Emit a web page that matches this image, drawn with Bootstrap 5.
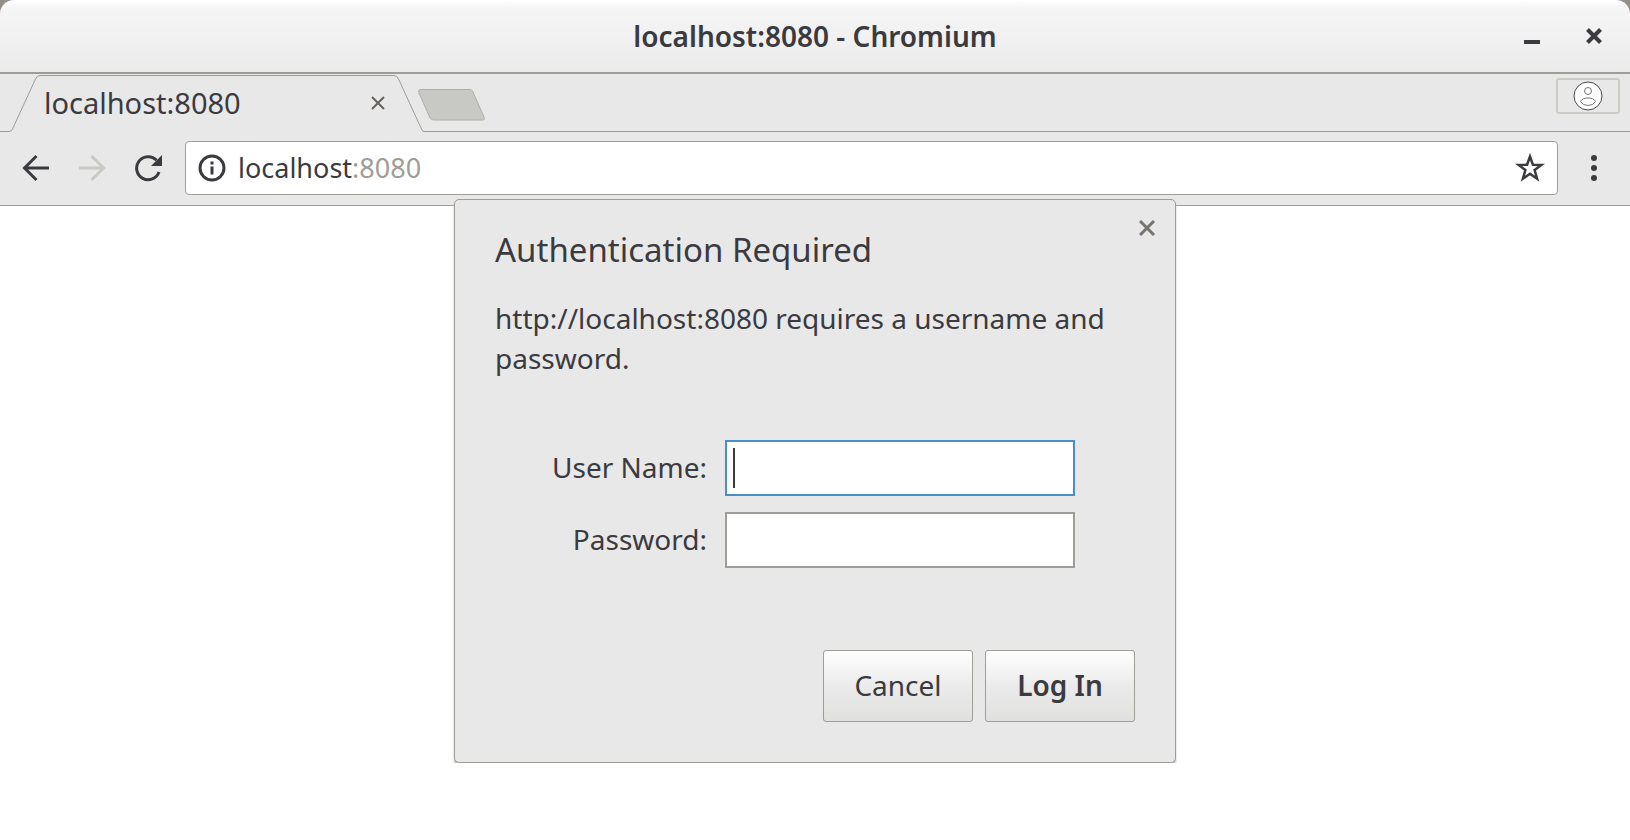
<!DOCTYPE html>
<html lang="en">
<head>
<meta charset="utf-8">
<meta name="viewport" content="width=device-width, initial-scale=1">
<title>localhost:8080 - Chromium</title>
<link href="https://cdn.jsdelivr.net/npm/bootstrap@5.3.0/dist/css/bootstrap.min.css" rel="stylesheet">
<style>
:root { --ink:#3b3a3f; --edge:#a09c97; --face:#e8e8e8; }
body { font-family:"Noto Sans","Open Sans",sans-serif; font-size:28px; line-height:40px; color:var(--ink); background:#fff; }
.titlebar-wrap { background:#948f89; }
.titlebar { height:74px; border-bottom:2px solid var(--edge); border-radius:14px 14px 0 0; background:linear-gradient(#fff 0,#f5f5f5 8px,#f0f0f0 44px,#eaeaea 100%); }
.titlebar h1 { font-size:28px; line-height:40px; font-weight:600; }
.window-controls { right:28px; top:24px; gap:46px; }
.plain { border:0; padding:0; background:none; color:inherit; display:flex; align-items:center; justify-content:center; }
.tabstrip, .toolbar { background:var(--face); }
.tabstrip { height:58px; }
.tab { width:424px; padding:0 39px 0 44px; font-size:29px; }
.tab-shape { inset:0; }
.strip-rest { border-bottom:1px solid var(--edge); padding:4px 10px 0 0; }
.new-tab { margin:10px 0 0 -7px; }
.profile { width:64px; height:36px; border:2px solid #cbcbc6; border-radius:3px; }
.toolbar { height:74px; border-bottom:1px solid var(--edge); padding:0 24px 2px 22px; }
.nav-buttons { gap:28px; margin-right:23px; }
.omnibox { height:54px; background:#fff; border:1px solid var(--edge); border-radius:4px; padding:0 12px; }
.url { font-size:27px; margin-left:12px; }
.url .port { color:var(--edge); }
.auth { width:722px; max-width:100%; margin-top:-7px; padding:28px 40px 40px; background:var(--face); border:1px solid var(--edge); border-radius:5px; box-shadow:0 3px 2px #bcbcb7; }
.auth h2 { font-size:33px; line-height:44px; font-weight:400; margin-bottom:26px; }
.auth p { margin-bottom:62px; }
.auth-close { right:20px; top:20px; }
.fields { display:grid; grid-template-columns:212px 1fr; column-gap:18px; row-gap:16px; align-items:center; padding-right:60px; margin-bottom:82px; }
.fields label { padding-bottom:2px; }
.field { height:56px; border:2px solid var(--edge); border-radius:0; padding:0 8px; font-size:28px; }
.field.active, .field:focus { border-color:#4b8ecb; box-shadow:none; }
.caret { left:8px; top:8px; width:2px; height:40px; background:var(--ink); }
.actions { gap:12px; }
.gbtn { width:150px; height:72px; padding:0 0 2px; font-size:28px; line-height:40px; color:var(--ink); border:1px solid var(--edge); border-radius:3px; background:linear-gradient(#fff,#ebebeb 50%,#e8e8e8 65%,#e0e0de); }
</style>
</head>
<body>
<header>
  <div class="titlebar-wrap">
    <div class="titlebar position-relative d-flex align-items-center justify-content-center">
      <h1 class="m-0">localhost:8080 - Chromium</h1>
      <div class="window-controls position-absolute d-flex">
        <button class="plain" type="button" aria-label="Minimize"><svg width="16" height="24" fill="currentColor"><path d="M0 16h16v4H0z"/></svg></button>
        <button class="plain" type="button" aria-label="Close window"><svg width="16" height="24" fill="none" stroke="currentColor" stroke-width="4"><path d="M1.500 5.500l13 13m0-13l-13 13"/></svg></button>
      </div>
    </div>
  </div>
  <div class="tabstrip d-flex">
    <div class="tab position-relative d-flex align-items-center justify-content-between flex-shrink-0">
      <svg class="tab-shape position-absolute" width="424" height="58" fill="none" stroke="#a09c97"><path d="M0 57.500H9Q11.500 57.500 12.500 55L35.500 5Q37 1.500 40 1.500H394Q397 1.500 398.500 5L421.500 55Q422.500 57.500 424 57.500"/></svg>
      <span class="position-relative">localhost:8080</span>
      <button class="plain position-relative" type="button" aria-label="Close tab"><svg width="14" height="14" fill="none" stroke="#66625f" stroke-width="2"><path d="M1 1l12 12M13 1L1 13"/></svg></button>
    </div>
    <div class="strip-rest flex-grow-1 d-flex align-items-start justify-content-between">
      <button class="plain new-tab" type="button" aria-label="New tab"><svg width="70" height="34"><path d="M3 1.500H53Q55 1.500 56 4L67 29Q68 32 66 32H17Q14 32 13 30L2 5Q1 1.500 3 1.500z" fill="#c8c8c4" stroke="#b0aea9"/></svg></button>
      <button class="plain profile" type="button" aria-label="Profile"><svg width="30" height="30" fill="#fff" stroke="#4a484b"><circle cx="15" cy="15" r="14"/><g stroke="#77746f"><circle cx="15" cy="10" r="3.500"/><path d="M7.500 20.500Q9 17 15 17T22.500 20.500Q20 24.500 15 24.500T7.500 20.500z"/></g></svg></button>
    </div>
  </div>
  <div class="toolbar d-flex align-items-center">
    <nav class="nav-buttons d-flex" aria-label="History">
      <button class="plain" type="button" aria-label="Back"><svg width="28" height="28" fill="none" stroke="currentColor" stroke-width="3"><path d="M27 14H3M14.500 2L2.500 14l12 12"/></svg></button>
      <button class="plain" type="button" aria-label="Forward"><svg width="28" height="28" fill="none" stroke="#c8c8c4" stroke-width="3"><path d="M1 14H25M13.500 2l12 12-12 12"/></svg></button>
      <button class="plain" type="button" aria-label="Reload"><svg width="28" height="28" fill="none" stroke="currentColor" stroke-width="3"><path d="M25 18A11.500 11.500 0 1 1 22.500 6.300"/><path d="M28 1v11H17z" fill="currentColor" stroke="none"/></svg></button>
    </nav>
    <div class="omnibox flex-grow-1 d-flex align-items-center">
      <svg width="28" height="28" fill="none" stroke="currentColor" stroke-width="3"><circle cx="14" cy="14" r="12"/><path d="M14 12.500v8M14 7.500v3"/></svg>
      <a class="url flex-grow-1 text-reset text-decoration-none" href="http://localhost:8080">localhost<span class="port">:8080</span></a>
      <button class="plain" type="button" aria-label="Bookmark this page"><svg width="30" height="30" fill="none" stroke="currentColor" stroke-width="2.500"><path d="M15 3.500l2.900 8.200 8.600.200-6.900 5.200 2.500 8.600L15 20.700l-7.100 5 2.500-8.600-6.900-5.200 8.600-.200z"/></svg></button>
    </div>
    <button class="plain ms-4" type="button" aria-label="Menu"><svg width="24" height="28" fill="currentColor"><circle cx="12" cy="4" r="3"/><circle cx="12" cy="14" r="3"/><circle cx="12" cy="24" r="3"/></svg></button>
  </div>
</header>
<main class="d-flex justify-content-center">
  <form class="auth position-relative" role="dialog" aria-labelledby="auth-title">
    <button class="plain auth-close position-absolute" type="button" aria-label="Close dialog"><svg width="16" height="16" fill="none" stroke="#77736f" stroke-width="3"><path d="M1 1l14 14M15 1L1 15"/></svg></button>
    <h2 id="auth-title">Authentication Required</h2>
    <p>http://localhost:8080 requires a username and password.</p>
    <div class="fields">
      <label class="text-end" for="user">User Name:</label>
      <div class="position-relative d-flex"><input class="form-control field active" id="user" type="text"><span class="caret position-absolute"></span></div>
      <label class="text-end" for="pass">Password:</label>
      <input class="form-control field" id="pass" type="password">
    </div>
    <div class="actions d-flex justify-content-end">
      <button class="btn gbtn" type="button">Cancel</button>
      <button class="btn gbtn fw-semibold" type="submit">Log In</button>
    </div>
  </form>
</main>
<script src="https://cdn.jsdelivr.net/npm/bootstrap@5.3.0/dist/js/bootstrap.bundle.min.js"></script>
</body>
</html>
